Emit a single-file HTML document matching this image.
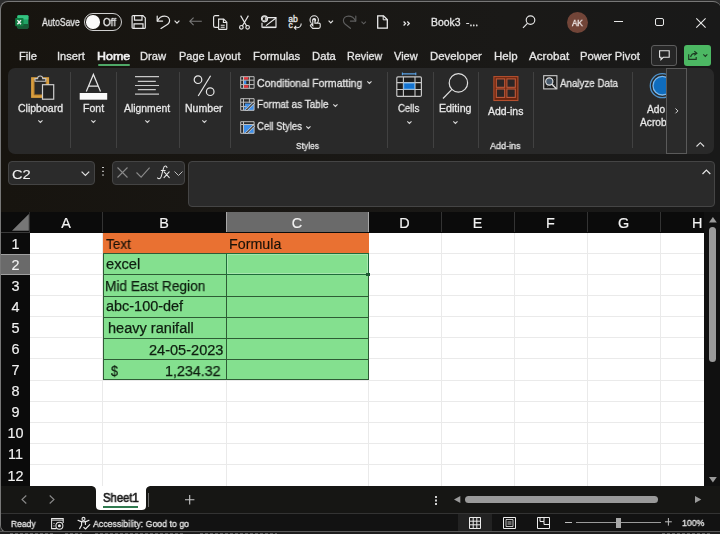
<!DOCTYPE html>
<html><head><meta charset="utf-8">
<style>
*{margin:0;padding:0;box-sizing:border-box}
html,body{width:720px;height:534px;overflow:hidden;background:#1b1916}
body{position:relative;font-family:"Liberation Sans",sans-serif;color:#e6e6e6}
.a{position:absolute}
.t{position:absolute;white-space:nowrap;line-height:1;transform-origin:0 0;-webkit-text-stroke:0.3px currentColor;will-change:transform}
svg{position:absolute;overflow:visible}
.sep{position:absolute;width:1px;background:#414141}
.hl{position:absolute;height:1px}
.vl{position:absolute;width:1px}
.ch{position:absolute;top:212px;height:20px;color:#f2f2f2;font-size:14.4px;text-align:center;line-height:23px;-webkit-text-stroke:0.15px #f2f2f2;will-change:transform}
.rh{position:absolute;left:1px;width:29px;color:#f2f2f2;font-size:14.4px;text-align:center;-webkit-text-stroke:0.15px #f2f2f2;will-change:transform}
</style></head><body>
<!-- window frame -->
<div class="a" style="left:0;top:0;width:720px;height:534px;background:#2c2c2c"></div>
<div class="a" style="left:0;top:1px;width:721px;height:532px;background:linear-gradient(90deg,#17140f,#1a1917 70%,#191919);border:1.4px solid #777;border-right:none;border-radius:8px 8px 8px 8px"></div>

<!-- ===== TITLE BAR ICONS ===== -->
<svg style="left:14px;top:15px" width="16" height="15" viewBox="0 0 16 15">
  <rect x="3.4" y="0.2" width="11" height="13.2" rx="1" fill="#21a366"/>
  <path d="M3.4 1.2a1 1 0 0 1 1-1h9a1 1 0 0 1 1 1V4.6H3.4z" fill="#33c481"/>
  <path d="M3.4 9h11v3.4a1 1 0 0 1-1 1h-9a1 1 0 0 1-1-1z" fill="#185c37"/>
  <rect x="1.2" y="3.1" width="8.3" height="8.1" rx="0.8" fill="#107c41"/>
  <path d="M3.4 5.1l3.6 4.2M7 5.1L3.4 9.3" stroke="#f4f4f4" stroke-width="1.4"/>
</svg>
<!-- toggle -->
<div class="a" style="left:84px;top:13px;width:38px;height:18px;border:1.3px solid #cfcfcf;border-radius:9px"></div>
<div class="a" style="left:86.3px;top:15.3px;width:13.4px;height:13.4px;border-radius:50%;background:#fafafa"></div>
<!-- save -->
<svg style="left:131px;top:15px" width="15" height="14" viewBox="0 0 15 14" fill="none" stroke="#e8e8e8" stroke-width="1.2">
  <path d="M1.1 1.6a1 1 0 0 1 1-1H12l2.3 2.3v9.5a1 1 0 0 1-1 1H2.1a1 1 0 0 1-1-1z"/>
  <path d="M3.5 0.6v4.6h7.5V0.6"/>
  <path d="M3 13.4V8.9h9v4.5"/>
</svg>
<!-- undo -->
<svg style="left:156px;top:15px" width="16" height="15" viewBox="0 0 16 15" fill="none" stroke="#e8e8e8" stroke-width="1.2" stroke-linecap="round" stroke-linejoin="round">
  <path d="M1.2 1.1v5h5.4"/>
  <path d="M1.4 5.9C3 2.6 5.8 1.1 8.6 1.1c3 0 5 2.2 5 4.6 0 1.5-.7 2.5-1.9 3.6L5 13.4"/>
</svg>
<svg style="left:174px;top:20px" width="6" height="4" viewBox="0 0 6 4" fill="none" stroke="#e0e0e0" stroke-width="1.2"><path d="M0.6 0.7l2.4 2.4 2.4-2.4"/></svg>
<!-- back arrow (disabled) -->
<svg style="left:189px;top:17px" width="13" height="9" viewBox="0 0 13 9" fill="none" stroke="#7a7a7a" stroke-width="1.1"><path d="M12.8 4.3H0.8M4.6 0.6L0.8 4.3l3.8 3.8"/></svg>
<!-- copy -->
<svg style="left:213px;top:15px" width="15" height="15" viewBox="0 0 15 15" fill="none" stroke="#e8e8e8" stroke-width="1.15">
  <path d="M6.2 0.6H2.2a1.6 1.6 0 0 0-1.6 1.6v8.6a1.6 1.6 0 0 0 1.6 1.6h3"/>
  <path d="M5.6 4.1h5.1l3.1 3.1v6.6a.6.6 0 0 1-.6.6H6.2a.6.6 0 0 1-.6-.6z"/>
  <path d="M10.4 4.1v3.4h3.4"/>
  <path d="M7.7 10.2h4M7.7 12.2h4"/>
</svg>
<!-- scissors -->
<svg style="left:239px;top:15px" width="11" height="15" viewBox="0 0 11 15" fill="none" stroke="#e8e8e8" stroke-width="1.15">
  <path d="M1.6 0.6l6.2 10.6M9.4 0.6L3.2 11.2"/>
  <circle cx="2.4" cy="12.3" r="1.8"/><circle cx="8.6" cy="12.3" r="1.8"/>
</svg>
<!-- email -->
<svg style="left:261px;top:15px" width="16" height="13" viewBox="0 0 16 13" fill="none" stroke="#e8e8e8" stroke-width="1.15">
  <path d="M6.5 2.6H15v9.6H1v-4.5"/>
  <path d="M5 10.6l10-7.6"/>
  <circle cx="3.5" cy="3.8" r="3" fill="#17140f"/>
  <path d="M4.4 2.5v2.3a.6.6 0 0 0 1.2 0V3.8a2.1 2.1 0 1 0-1.1 1.8" stroke-width="0.9"/>
  <path d="M1.5 12.4h13.5" stroke-width="1.4"/>
</svg>
<!-- spelling abc -->
<svg style="left:288px;top:15px" width="15" height="15" viewBox="0 0 15 15" fill="#e8e8e8">
  <text x="0.2" y="6.8" font-family="Liberation Sans" font-size="8.6" stroke="#e8e8e8" stroke-width="0.3">ab</text>
  <text x="0.4" y="13.3" font-family="Liberation Sans" font-size="8.6" stroke="#e8e8e8" stroke-width="0.3">c</text>
  <path d="M13.2 8.4c0 2.4-1.8 4.4-4.5 4.4H6.4M8.2 10.9l-1.9 1.9 1.9 1.9" fill="none" stroke="#e8e8e8" stroke-width="1.1"/>
</svg>
<!-- touch -->
<svg style="left:309px;top:15px" width="13" height="14" viewBox="0 0 13 14" fill="none" stroke="#e8e8e8" stroke-width="1.1">
  <circle cx="5.2" cy="5" r="4.2"/>
  <circle cx="5.2" cy="5" r="2" fill="#e8e8e8" stroke="none"/>
  <path d="M3.8 5.3v5.4l-1-.9a.9.9 0 0 0-1.3 1.2l2.2 2.4h5.9c.9 0 1.6-.7 1.6-1.6V9.3c0-.7-.5-1.2-1.2-1.2H5.9V5.3a1 1 0 0 0-2.1 0z" fill="#17140f"/>
</svg>
<svg style="left:328px;top:20.3px" width="6" height="4" viewBox="0 0 6 4" fill="none" stroke="#e0e0e0" stroke-width="1.2"><path d="M0.6 0.7l2.2 2.2 2.2-2.2"/></svg>
<!-- redo (disabled) -->
<svg style="left:343px;top:15px" width="14" height="14" viewBox="0 0 14 14" fill="none" stroke="#5e5e5e" stroke-width="1.15" stroke-linecap="round" stroke-linejoin="round">
  <path d="M12.8 1.1v5H7.4"/>
  <path d="M12.6 5.9C11 2.6 8.2 1.1 5.4 1.1c-3 0-5 2.2-5 4.6 0 1.5.7 2.5 1.9 3.6L7.4 13.3"/>
</svg>
<svg style="left:361px;top:20.5px" width="6" height="4" viewBox="0 0 6 4" fill="none" stroke="#5e5e5e" stroke-width="1.1"><path d="M0.5 0.6l2.2 2.2 2.2-2.2"/></svg>
<!-- new doc -->
<svg style="left:377px;top:15px" width="11" height="14" viewBox="0 0 11 14" fill="none" stroke="#f0f0f0" stroke-width="1.25">
  <path d="M0.7 0.8h5.8l3.8 3.8v8.6H0.7z"/>
  <path d="M6.2 0.8v4h4" stroke-width="1"/>
</svg>
<svg style="left:403.3px;top:20.8px" width="7" height="5" viewBox="0 0 7 5" fill="none" stroke="#e8e8e8" stroke-width="1.2"><path d="M0.6 0.5l2 2-2 2M4.3 0.5l2 2-2 2"/></svg>
<!-- search -->
<svg style="left:522px;top:15px" width="14" height="14" viewBox="0 0 14 14" fill="none" stroke="#e8e8e8" stroke-width="1.15">
  <circle cx="8.5" cy="5.1" r="4.3"/><path d="M5.4 8.3L1 12.8"/>
</svg>
<!-- avatar -->
<div class="a" style="left:567px;top:11.5px;width:21px;height:21px;border-radius:50%;background:#724538"></div>
<!-- window controls -->
<div class="a" style="left:613.5px;top:21px;width:9.5px;height:1.1px;background:#e8e8e8"></div>
<div class="a" style="left:654.7px;top:17.9px;width:9.6px;height:8.6px;border:1.1px solid #e8e8e8;border-radius:2px"></div>
<svg style="left:696px;top:17.5px" width="10" height="10" viewBox="0 0 10 10" fill="none" stroke="#e8e8e8" stroke-width="1.1"><path d="M0.3 0.3l9.3 9.3M9.6 0.3L0.3 9.6"/></svg>

<!-- ===== MENU ===== -->
<div class="a" style="left:98px;top:64px;width:32px;height:2px;border-radius:1px;background:#4fa867"></div>
<!-- comment btn -->
<div class="a" style="left:651px;top:45px;width:26px;height:21px;border:1px solid #5d5d5d;border-radius:3px;background:#262626"></div>
<svg style="left:659px;top:50px" width="11" height="11" viewBox="0 0 11 11" fill="none" stroke="#e8e8e8" stroke-width="1.1">
  <path d="M0.6 0.7h9.6v6.6H4.2L2 9.6V7.3H0.6z"/>
</svg>
<!-- share btn -->
<div class="a" style="left:684px;top:45px;width:27px;height:21px;border-radius:3px;background:#4cb863"></div>
<svg style="left:688px;top:50px" width="10" height="10" viewBox="0 0 10 10" fill="none" stroke="#1d3a22" stroke-width="1.15">
  <path d="M0.7 4.3v5h7.5V7"/>
  <path d="M2.6 7.2c.4-2.6 2.2-3.9 5-3.9M6.3 1.2l2.6 2.1-2.6 2.1"/>
</svg>
<svg style="left:703px;top:54px" width="5" height="3" viewBox="0 0 5 3" fill="none" stroke="#1d3a22" stroke-width="1.1"><path d="M0.3 0.4l2 2 2-2"/></svg>
<!-- ===== RIBBON ===== -->
<div class="a" style="left:8px;top:68px;width:706px;height:86px;background:#292929;border-radius:7px"></div>
<div class="sep" style="left:70px;top:72px;height:76px"></div>
<div class="sep" style="left:115.5px;top:72px;height:76px"></div>
<div class="sep" style="left:178.5px;top:72px;height:76px"></div>
<div class="sep" style="left:230px;top:72px;height:76px"></div>
<div class="sep" style="left:386.5px;top:72px;height:76px"></div>
<div class="sep" style="left:432.5px;top:72px;height:76px"></div>
<div class="sep" style="left:478px;top:72px;height:76px"></div>
<div class="sep" style="left:532.5px;top:72px;height:76px"></div>
<div class="sep" style="left:632px;top:72px;height:76px"></div>
<!-- clipboard icon -->
<svg style="left:30px;top:73px" width="26" height="28" viewBox="0 0 26 28" fill="none">
  <rect x="2.75" y="5.85" width="14.7" height="17.4" stroke="#d99e3e" stroke-width="3.3"/>
  <rect x="4.1" y="7.2" width="12" height="14.7" stroke="#8a5a1c" stroke-width="0.6"/>
  <path d="M5 8.2V5.6h2.6a2.55 2.55 0 0 1 5.1 0h3.1v2.6z" fill="#292929" stroke="#c4c4c4" stroke-width="1.1"/>
  <rect x="12.5" y="11.7" width="11.2" height="14.5" fill="#222" stroke="#cfcfcf" stroke-width="1.2"/>
</svg>
<!-- font A -->
<svg style="left:79px;top:73px" width="29" height="28" viewBox="0 0 29 28" fill="none">
  <path d="M7.3 18.6L14.4 1.4l7.1 17.2M9.6 13.2h9.6" stroke="#e6e6e6" stroke-width="1.2"/>
  <rect x="0.7" y="20" width="27.5" height="6.7" fill="#fafafa"/>
</svg>
<!-- alignment -->
<svg style="left:134px;top:75px" width="26" height="21" viewBox="0 0 26 21" stroke="#c8c8c8" stroke-width="1.2">
  <path d="M1 1.7h24M3.8 6.3h18M1 10.5h24M3.8 14.7h18M1 19.2h24"/>
</svg>
<!-- percent -->
<svg style="left:193px;top:75px" width="23" height="22" viewBox="0 0 23 22" fill="none" stroke="#e6e6e6" stroke-width="1.2">
  <circle cx="5" cy="4.7" r="3.8"/><circle cx="17.2" cy="16.7" r="3.8"/><path d="M17.6 0.8L5.2 21"/>
</svg>
<!-- small chevrons under big buttons -->
<svg style="left:38px;top:120px" width="5" height="3" viewBox="0 0 5 3" fill="none" stroke="#d8d8d8" stroke-width="1.1"><path d="M0.3 0.4l2.1 2.1 2.1-2.1"/></svg>
<svg style="left:91px;top:120px" width="5" height="3" viewBox="0 0 5 3" fill="none" stroke="#d8d8d8" stroke-width="1.1"><path d="M0.3 0.4l2.1 2.1 2.1-2.1"/></svg>
<svg style="left:144.5px;top:120px" width="5" height="3" viewBox="0 0 5 3" fill="none" stroke="#d8d8d8" stroke-width="1.1"><path d="M0.3 0.4l2.1 2.1 2.1-2.1"/></svg>
<svg style="left:201.5px;top:120px" width="5" height="3" viewBox="0 0 5 3" fill="none" stroke="#d8d8d8" stroke-width="1.1"><path d="M0.3 0.4l2.1 2.1 2.1-2.1"/></svg>
<svg style="left:406.5px;top:120.5px" width="5" height="3" viewBox="0 0 5 3" fill="none" stroke="#d8d8d8" stroke-width="1.1"><path d="M0.3 0.4l2.1 2.1 2.1-2.1"/></svg>
<svg style="left:452.5px;top:120.5px" width="5" height="3" viewBox="0 0 5 3" fill="none" stroke="#d8d8d8" stroke-width="1.1"><path d="M0.3 0.4l2.1 2.1 2.1-2.1"/></svg>
<!-- styles chevrons -->
<svg style="left:366.5px;top:81px" width="5" height="3" viewBox="0 0 5 3" fill="none" stroke="#d8d8d8" stroke-width="1.1"><path d="M0.3 0.4l2.1 2.1 2.1-2.1"/></svg>
<svg style="left:332.5px;top:103.5px" width="5" height="3" viewBox="0 0 5 3" fill="none" stroke="#d8d8d8" stroke-width="1.1"><path d="M0.3 0.4l2.1 2.1 2.1-2.1"/></svg>
<svg style="left:306px;top:125.5px" width="5" height="3" viewBox="0 0 5 3" fill="none" stroke="#d8d8d8" stroke-width="1.1"><path d="M0.3 0.4l2.1 2.1 2.1-2.1"/></svg>
<!-- conditional formatting icon -->
<svg style="left:240px;top:75.5px" width="15" height="13" viewBox="0 0 15 13">
  <rect x="3.5" y="1" width="4.8" height="2.6" fill="#e8323a"/>
  <rect x="3.5" y="9.2" width="4.8" height="2.6" fill="#e8323a"/>
  <rect x="3.5" y="4.4" width="2.8" height="4" fill="#3d8ee8"/>
  <path d="M0.7 0.7h13.4v11.6H0.7zM0.7 4.2h13.4M0.7 8.6h13.4M3.5 0.7v11.6M9.4 0.7v11.6" fill="none" stroke="#bdbdbd" stroke-width="1"/>
</svg>
<!-- format as table icon -->
<svg style="left:240px;top:98px" width="15" height="13" viewBox="0 0 15 13">
  <path d="M5 5.5h9v7H4z" fill="#3d8ee8"/>
  <path d="M0.7 0.7h13.4v11.6H0.7zM0.7 4.2h13.4M0.7 8.6h6M3.5 0.7v11.6M9.4 0.7v4" fill="none" stroke="#bdbdbd" stroke-width="1"/>
  <path d="M5.5 11.8l7.8-7.8 1.2 1.2-7.8 7.8z" fill="#292929" stroke="#e0e0e0" stroke-width="0.9"/>
</svg>
<!-- cell styles icon -->
<svg style="left:240px;top:120.5px" width="15" height="13" viewBox="0 0 15 13">
  <path d="M3.5 3.5h10.6v9H3.5z" fill="#3d8ee8"/>
  <path d="M0.7 0.7h13.4v11.6H0.7zM0.7 3.5h13.4M3.5 0.7v11.6" fill="none" stroke="#bdbdbd" stroke-width="1"/>
  <path d="M5.5 11.8l7.8-7.8 1.2 1.2-7.8 7.8z" fill="#292929" stroke="#e0e0e0" stroke-width="0.9"/>
</svg>
<!-- cells icon -->
<svg style="left:396px;top:71.5px" width="27" height="25" viewBox="0 0 27 25">
  <path d="M6.4 1.9h13.4M6.4 0.6v2.6M19.8 0.6v2.6" stroke="#5aa2e6" stroke-width="1.1"/>
  <rect x="0.8" y="4.9" width="24.6" height="19.5" rx="1.2" fill="#1c1c1c" stroke="#c8c8c8" stroke-width="1.2"/>
  <rect x="7.4" y="10.6" width="11.6" height="6.9" fill="#1473d0"/>
  <path d="M0.8 10.6h24.6M0.8 17.5h24.6M7.4 4.9v19.5M19 4.9v19.5" stroke="#c8c8c8" stroke-width="1.1"/>
  <rect x="7.9" y="11.1" width="10.6" height="5.9" fill="none" stroke="#5aa8ee" stroke-width="0.8"/>
</svg>
<!-- editing magnifier -->
<svg style="left:442px;top:72px" width="28" height="28" viewBox="0 0 28 28" fill="none" stroke="#e0e0e0" stroke-width="1.2">
  <circle cx="16.4" cy="10.9" r="9.2"/><path d="M9.9 17.4L1 26.5"/>
</svg>
<!-- add-ins icon -->
<svg style="left:493px;top:75.5px" width="26" height="25" viewBox="0 0 26 25">
  <rect x="0.9" y="0.6" width="24" height="23.9" fill="#6a240e" stroke="#b5502f" stroke-width="1.1"/>
  <g fill="#2b2626" stroke="#bf5a3a" stroke-width="1.1">
  <rect x="3.3" y="2.9" width="8.4" height="8.4"/><rect x="13.9" y="2.9" width="8.4" height="8.4"/>
  <rect x="3.3" y="13" width="8.4" height="8.4"/><rect x="13.9" y="13" width="8.4" height="8.4"/>
  </g>
</svg>
<!-- analyze data icon -->
<svg style="left:542.5px;top:75px" width="15" height="15" viewBox="0 0 15 15" fill="none">
  <rect x="0.7" y="0.7" width="13.2" height="13.2" fill="#1c1c1c" stroke="#cfcfcf" stroke-width="1.1"/>
  <path d="M3 4.5h9M3 9.5h9M4.5 3v9M10 3v9" stroke="#555" stroke-width="0.7" stroke-dasharray="1 1"/>
  <circle cx="6.3" cy="6.5" r="3.6" fill="#46586a" stroke="#e0e0e0" stroke-width="1.1"/>
  <path d="M8.9 9.2l4.5 4.5" stroke="#e0e0e0" stroke-width="1.3"/>
</svg>
<!-- adobe -->
<svg style="left:649px;top:73px" width="27" height="26" viewBox="0 0 27 26">
  <circle cx="13.3" cy="12.7" r="12" fill="none" stroke="#4f93cc" stroke-width="1.3"/>
  <circle cx="13.3" cy="12.7" r="9.3" fill="#0f6cbd" stroke="#7ab8ee" stroke-width="1.3"/>
</svg>
<div class="t" style="left:646.5px;top:104.5px;font-size:10.2px;color:#e6e6e6">Ado</div>
<div class="t" style="left:639.5px;top:117.5px;font-size:10.2px;color:#e6e6e6">Acrob</div>
<!-- overflow box -->
<div class="a" style="left:666px;top:68px;width:21px;height:86px;background:#2a2a2a;border:1px solid #5a5a5a"></div>
<svg style="left:674.5px;top:108px" width="4" height="6" viewBox="0 0 4 6" fill="none" stroke="#d8d8d8" stroke-width="1"><path d="M0.5 0.5l2.4 2.4-2.4 2.4"/></svg>
<!-- collapse ^ -->
<svg style="left:695.5px;top:142px" width="9" height="5" viewBox="0 0 9 5" fill="none" stroke="#e0e0e0" stroke-width="1.1"><path d="M0.5 4.5L4.3 0.7 8.1 4.5"/></svg>
<!-- ===== FORMULA BAR ===== -->
<div class="a" style="left:8px;top:160.5px;width:87px;height:24.5px;background:#2b2b2b;border:1px solid #444;border-radius:4px"></div>
<svg style="left:81px;top:170.5px" width="9" height="5" viewBox="0 0 9 5" fill="none" stroke="#e0e0e0" stroke-width="1.2"><path d="M0.6 0.6l3.8 3.8 3.8-3.8"/></svg>
<div class="a" style="left:102px;top:166.5px;width:1.7px;height:1.7px;border-radius:1px;background:#e0e0e0;box-shadow:0 3.8px 0 #e0e0e0,0 7.6px 0 #e0e0e0"></div>
<div class="a" style="left:111.5px;top:160.5px;width:73.5px;height:24.5px;background:#2b2b2b;border:1px solid #444;border-radius:4px"></div>
<svg style="left:117px;top:167px" width="11" height="11" viewBox="0 0 11 11" fill="none" stroke="#8a8a8a" stroke-width="1.1"><path d="M0.5 0.5l10 10M10.5 0.5l-10 10"/></svg>
<svg style="left:136px;top:167px" width="14" height="11" viewBox="0 0 14 11" fill="none" stroke="#8a8a8a" stroke-width="1.1"><path d="M0.5 5.5l4.6 4.6L13.6 0.6"/></svg>
<svg style="left:157px;top:165px" width="14" height="15" viewBox="0 0 14 15" fill="none" stroke="#e6e6e6" stroke-width="1.05" stroke-linecap="round">
  <path d="M10 2.6C9.8 1.5 9 1 8.2 1.1 7 1.3 6.6 2.4 6.3 3.8L4.2 11.6C3.8 13 3.2 13.6 2.2 13.6c-.8 0-1.4-.3-1.6-.7"/>
  <path d="M4.2 5.5h4"/>
  <path d="M7.1 6.9l5.2 5.8M12.2 6.9L7 12.7"/>
</svg>
<svg style="left:174px;top:171px" width="9" height="5" viewBox="0 0 9 5" fill="none" stroke="#bdbdbd" stroke-width="1"><path d="M0.5 0.5l4 4 4-4"/></svg>
<div class="a" style="left:188px;top:160.5px;width:526.5px;height:46.5px;background:#2a2a2a;border:1px solid #454545;border-radius:4px"></div>
<svg style="left:702px;top:168.5px" width="9" height="6" viewBox="0 0 9 6" fill="none" stroke="#e6e6e6" stroke-width="1.2"><path d="M0.5 5L4.4 1 8.3 5"/></svg>

<!-- ===== GRID ===== -->
<div class="a" style="left:1px;top:212px;width:703px;height:20.5px;background:#0b0b0b"></div>
<div class="a" style="left:1px;top:212px;width:29px;height:274px;background:#0b0b0b"></div>
<div class="a" style="left:704px;top:212px;width:16px;height:274px;background:#101010"></div>
<div class="a" style="left:30px;top:232.5px;width:674px;height:253px;background:#ffffff"></div>
<!-- corner triangle -->
<svg style="left:11.5px;top:214.3px" width="17" height="17" viewBox="0 0 17 17"><path d="M0 16.7H16.8V0z" fill="#767676"/></svg>
<div class="a" style="left:29px;top:212px;width:1px;height:20.5px;background:#2e2e2e"></div>
<div class="a" style="left:1px;top:232px;width:29px;height:1px;background:#3a3a3a"></div>
<!-- header separators -->
<div class="vl" style="left:102px;top:212px;height:20px;background:#333"></div>
<div class="vl" style="left:441px;top:212px;height:20px;background:#333"></div>
<div class="vl" style="left:514px;top:212px;height:20px;background:#333"></div>
<div class="vl" style="left:587px;top:212px;height:20px;background:#333"></div>
<div class="vl" style="left:660px;top:212px;height:20px;background:#333"></div>
<!-- selected col header C -->
<div class="a" style="left:226px;top:212px;width:142.5px;height:20px;background:#6a6a6a;border-left:1px solid #a8a8a8;border-right:1px solid #a8a8a8"></div>
<!-- selected row header 2 -->
<div class="a" style="left:1px;top:253.5px;width:29px;height:21px;background:#6a6a6a;border-top:1px solid #a0a0a0;border-bottom:1px solid #a0a0a0"></div>
<!-- column header labels -->
<div class="ch" style="left:30px;width:72px">A</div>
<div class="ch" style="left:102px;width:124px">B</div>
<div class="ch" style="left:226px;width:142px">C</div>
<div class="ch" style="left:368px;width:73px">D</div>
<div class="ch" style="left:441px;width:73px">E</div>
<div class="ch" style="left:514px;width:73px">F</div>
<div class="ch" style="left:587px;width:73px">G</div>
<div class="ch" style="left:660px;width:73px;text-align:left;padding-left:32px">H</div>
<!-- row header labels -->
<div class="rh" style="top:232.5px;height:21px;line-height:22px">1</div>
<div class="rh" style="top:253.5px;height:21px;line-height:22px">2</div>
<div class="rh" style="top:274.6px;height:21px;line-height:22px">3</div>
<div class="rh" style="top:295.7px;height:21px;line-height:22px">4</div>
<div class="rh" style="top:316.8px;height:21px;line-height:22px">5</div>
<div class="rh" style="top:337.9px;height:21px;line-height:22px">6</div>
<div class="rh" style="top:359px;height:21px;line-height:22px">7</div>
<div class="rh" style="top:380.1px;height:21px;line-height:22px">8</div>
<div class="rh" style="top:401.2px;height:21px;line-height:22px">9</div>
<div class="rh" style="top:422.3px;height:21px;line-height:22px">10</div>
<div class="rh" style="top:443.4px;height:21px;line-height:22px">11</div>
<div class="rh" style="top:464.5px;height:21px;line-height:22px">12</div>
<!-- grid lines -->
<div class="hl" style="left:30px;width:674px;top:253px;background:#eaeaea"></div>
<div class="hl" style="left:30px;width:674px;top:274px;background:#eaeaea"></div>
<div class="hl" style="left:30px;width:674px;top:295px;background:#eaeaea"></div>
<div class="hl" style="left:30px;width:674px;top:316px;background:#eaeaea"></div>
<div class="hl" style="left:30px;width:674px;top:337px;background:#eaeaea"></div>
<div class="hl" style="left:30px;width:674px;top:358px;background:#eaeaea"></div>
<div class="hl" style="left:30px;width:674px;top:379.5px;background:#eaeaea"></div>
<div class="hl" style="left:30px;width:674px;top:401px;background:#eaeaea"></div>
<div class="hl" style="left:30px;width:674px;top:422px;background:#eaeaea"></div>
<div class="hl" style="left:30px;width:674px;top:443px;background:#eaeaea"></div>
<div class="hl" style="left:30px;width:674px;top:464px;background:#eaeaea"></div>
<div class="vl" style="left:102px;top:232.5px;height:253px;background:#eaeaea"></div>
<div class="vl" style="left:225.5px;top:232.5px;height:253px;background:#eaeaea"></div>
<div class="vl" style="left:368px;top:232.5px;height:253px;background:#eaeaea"></div>
<div class="vl" style="left:441px;top:232.5px;height:253px;background:#eaeaea"></div>
<div class="vl" style="left:514px;top:232.5px;height:253px;background:#eaeaea"></div>
<div class="vl" style="left:587px;top:232.5px;height:253px;background:#eaeaea"></div>
<div class="vl" style="left:660px;top:232.5px;height:253px;background:#eaeaea"></div>
<!-- orange header row -->
<div class="a" style="left:102.5px;top:232.5px;width:266px;height:21px;background:#e97132;border-bottom:1px solid #4a3a20"></div>
<!-- green table -->
<div class="a" style="left:102.5px;top:253px;width:266px;height:126.5px;background:#84e08f;border:1px solid #2e5c35"></div>
<div class="hl" style="left:102.5px;width:266px;top:274px;background:#2e5c35"></div>
<div class="hl" style="left:102.5px;width:266px;top:295.5px;background:#2e5c35"></div>
<div class="hl" style="left:102.5px;width:266px;top:316.5px;background:#2e5c35"></div>
<div class="hl" style="left:102.5px;width:266px;top:337.5px;background:#2e5c35"></div>
<div class="hl" style="left:102.5px;width:266px;top:358.5px;background:#2e5c35"></div>
<div class="vl" style="left:225.5px;top:253px;height:126.5px;background:#2e5c35"></div>
<!-- selection C2 -->
<div class="a" style="left:225.5px;top:253px;width:143.5px;height:22px;border:1px solid #1f6b3a;box-shadow:inset 0 0 0 1px #a6e6ae"></div>
<div class="a" style="left:366px;top:272.5px;width:3.5px;height:3.5px;background:#1f5a34"></div>
<!-- vertical scrollbar -->
<svg style="left:708.5px;top:216.5px" width="8" height="6" viewBox="0 0 8 6"><path d="M0 5.6L3.9 0 7.8 5.6z" fill="#9a9a9a"/></svg>
<div class="a" style="left:709px;top:226.5px;width:7px;height:135.5px;border-radius:3.5px;background:#9a9a9a"></div>
<svg style="left:708.5px;top:477px" width="8" height="6" viewBox="0 0 8 6"><path d="M0 0L3.9 5.6 7.8 0z" fill="#9a9a9a"/></svg>
<!-- ===== SHEET TAB BAR ===== -->
<div class="a" style="left:1px;top:485.5px;width:719px;height:27px;background:#161614"></div>
<svg style="left:21px;top:495px" width="6" height="9" viewBox="0 0 6 9" fill="none" stroke="#8a8a8a" stroke-width="1.1"><path d="M5.3 0.5L1 4.5l4.3 4"/></svg>
<svg style="left:48.5px;top:495px" width="6" height="9" viewBox="0 0 6 9" fill="none" stroke="#8a8a8a" stroke-width="1.1"><path d="M0.7 0.5L5 4.5l-4.3 4"/></svg>
<!-- tab -->
<svg style="left:90px;top:485.5px" width="62" height="25" viewBox="0 0 62 25">
  <path d="M0 0h62c-4.5 0-6 1.5-6 5v15a4 4 0 0 1-4 4H10a4 4 0 0 1-4-4V5C6 1.5 4.5 0 0 0z" fill="#ffffff"/>
</svg>
<div class="a" style="left:103px;top:505.5px;width:35px;height:2px;background:#2f7a4f"></div>
<div class="a" style="left:148px;top:493px;width:1px;height:14px;background:#6a6a6a"></div>
<svg style="left:185px;top:494.5px" width="10" height="10" viewBox="0 0 10 10" fill="none" stroke="#c8c8c8" stroke-width="1.1"><path d="M4.7 0v9.4M0 4.7h9.4"/></svg>
<!-- horizontal scroll -->
<div class="a" style="left:435px;top:496px;width:2px;height:2px;background:#d0d0d0;box-shadow:0 3.5px 0 #d0d0d0,0 7px 0 #d0d0d0"></div>
<svg style="left:454px;top:495.8px" width="7" height="7" viewBox="0 0 7 7"><path d="M6.3 0L0 3.5 6.3 7z" fill="#9a9a9a"/></svg>
<div class="a" style="left:464.5px;top:495.8px;width:193px;height:7px;border-radius:3.5px;background:#9a9a9a"></div>
<svg style="left:695px;top:495.8px" width="7" height="7" viewBox="0 0 7 7"><path d="M0 0L6.3 3.5 0 7z" fill="#9a9a9a"/></svg>

<!-- ===== STATUS BAR ===== -->
<div class="a" style="left:1px;top:512.5px;width:719px;height:1px;background:#333"></div>
<div class="a" style="left:1px;top:513.5px;width:719px;height:18px;background:#121212;border-radius:0 0 0 7px"></div>
<div class="a" style="left:0px;top:531px;width:720px;height:1.3px;background:#5a5a5a"></div>
<div class="a" style="left:0px;top:532.3px;width:720px;height:2px;background:#1e1e1e"></div>
<div class="a" style="left:10px;top:532.6px;width:45px;height:1.4px;background:repeating-linear-gradient(90deg,#5e5e5e 0 3px,transparent 3px 5px)"></div>
<div class="a" style="left:65px;top:532.6px;width:17px;height:1.4px;background:repeating-linear-gradient(90deg,#5e5e5e 0 3px,transparent 3px 5px)"></div>
<div class="a" style="left:95px;top:532.6px;width:90px;height:1.4px;background:repeating-linear-gradient(90deg,#5e5e5e 0 3px,transparent 3px 5px)"></div>
<div class="a" style="left:200px;top:532.6px;width:77px;height:1.4px;background:repeating-linear-gradient(90deg,#5e5e5e 0 3px,transparent 3px 5px)"></div>
<div class="a" style="left:662px;top:532.6px;width:50px;height:1.4px;background:repeating-linear-gradient(90deg,#5e5e5e 0 3px,transparent 3px 5px)"></div>
<!-- macro record icon -->
<svg style="left:50.5px;top:517.5px" width="14" height="12" viewBox="0 0 14 12" fill="none" stroke="#e6e6e6" stroke-width="1.05">
  <path d="M5.5 10.6H0.6V0.6h11.6v4.5"/><path d="M0.6 2.2h11.6" stroke-width="0.9"/>
  <circle cx="3" cy="5.3" r="0.6" fill="#e6e6e6" stroke="none"/><circle cx="3" cy="7.9" r="0.6" fill="#e6e6e6" stroke="none"/>
  <circle cx="8.4" cy="7.7" r="3.5" fill="#121212"/><circle cx="8.4" cy="7.7" r="1.5" fill="#e6e6e6" stroke="none"/>
</svg>
<!-- accessibility icon -->
<svg style="left:77px;top:517px" width="14" height="13" viewBox="0 0 14 13" fill="none" stroke="#e6e6e6" stroke-width="1.15" stroke-linecap="round" stroke-linejoin="round">
  <circle cx="6.5" cy="1.9" r="1.5"/>
  <path d="M1 3.3c1.5 1.1 3.3 1.6 5.5 1.6s4-.5 5.5-1.6"/>
  <path d="M4.6 4.8v3.4L2.6 11.6M8.4 4.8v2.6"/>
  <path d="M6.8 10.3l1.7 1.7 4.3-4.3"/>
</svg>
<!-- view buttons -->
<div class="a" style="left:458px;top:513.5px;width:34px;height:17.5px;background:#222"></div>
<svg style="left:469px;top:517px" width="12" height="12" viewBox="0 0 12 12" fill="none" stroke="#ececec" stroke-width="1">
  <path d="M0.5 0.5h11v11h-11zM0.5 4.2h11M0.5 7.8h11M4.2 0.5v11M7.8 0.5v11"/>
</svg>
<svg style="left:503px;top:517px" width="13" height="12" viewBox="0 0 13 12" fill="none" stroke="#ececec" stroke-width="1">
  <path d="M0.5 0.5h12v11h-12z"/><path d="M3 2.5h7v7H3z" stroke-width="0.8"/><path d="M4.5 5h4M4.5 7h4" stroke-width="0.8"/>
</svg>
<svg style="left:537px;top:517px" width="13" height="12" viewBox="0 0 13 12" fill="none" stroke="#ececec" stroke-width="1">
  <path d="M0.5 0.5h12v11h-12z"/><path d="M3 0.5v4h4v3h5.5M7 0.5v4" stroke-width="1"/>
</svg>
<!-- zoom slider -->
<div class="a" style="left:565px;top:522.3px;width:6.5px;height:1px;background:#bdbdbd"></div>
<div class="a" style="left:576px;top:522px;width:85px;height:1.3px;background:#9a9a9a"></div>
<div class="a" style="left:616px;top:518px;width:5px;height:10px;background:#a8a8a8"></div>
<svg style="left:665px;top:518.3px" width="7" height="8" viewBox="0 0 7 8" fill="none" stroke="#bdbdbd" stroke-width="1"><path d="M3.4 0v7.6M0 3.8h6.8"/></svg>
<div class="t" style="left:41.7px;top:18.22px;font-size:10.10px;transform:scaleX(0.860);color:#e6e6e6">AutoSave</div>
<div class="t" style="left:102.5px;top:18.22px;font-size:10.10px;transform:scaleX(0.973);color:#e6e6e6">Off</div>
<div class="t" style="left:430.9px;top:18.02px;font-size:10.10px;transform:scaleX(1.031);color:#e6e6e6">Book3</div>
<div class="t" style="left:466.4px;top:18.02px;font-size:10.10px;transform:scaleX(1.023);color:#e6e6e6">-...</div>
<div class="t" style="left:572.0px;top:19.21px;font-size:9.19px;transform:scaleX(0.880);color:#f4eeee">AK</div>
<div class="t" style="left:18.8px;top:51.48px;font-size:10.81px;transform:scaleX(1.035);color:#e6e6e6">File</div>
<div class="t" style="left:56.8px;top:51.48px;font-size:10.81px;transform:scaleX(1.026);color:#e6e6e6">Insert</div>
<div class="t" style="left:97.3px;top:51.48px;font-size:10.81px;transform:scaleX(1.151);color:#f2f2f2;-webkit-text-stroke:0.55px currentColor">Home</div>
<div class="t" style="left:140.4px;top:51.48px;font-size:10.81px;transform:scaleX(1.036);color:#e6e6e6">Draw</div>
<div class="t" style="left:179.1px;top:51.48px;font-size:10.81px;transform:scaleX(1.013);color:#e6e6e6">Page Layout</div>
<div class="t" style="left:253.1px;top:51.48px;font-size:10.81px;transform:scaleX(1.049);color:#e6e6e6">Formulas</div>
<div class="t" style="left:311.8px;top:51.48px;font-size:10.81px;transform:scaleX(1.043);color:#e6e6e6">Data</div>
<div class="t" style="left:346.9px;top:51.48px;font-size:10.81px;transform:scaleX(0.996);color:#e6e6e6">Review</div>
<div class="t" style="left:394.0px;top:51.48px;font-size:10.81px;transform:scaleX(1.019);color:#e6e6e6">View</div>
<div class="t" style="left:429.6px;top:51.48px;font-size:10.81px;transform:scaleX(1.054);color:#e6e6e6">Developer</div>
<div class="t" style="left:493.8px;top:51.48px;font-size:10.81px;transform:scaleX(1.064);color:#e6e6e6">Help</div>
<div class="t" style="left:528.7px;top:51.48px;font-size:10.81px;transform:scaleX(1.078);color:#e6e6e6">Acrobat</div>
<div class="t" style="left:579.8px;top:51.48px;font-size:10.81px;transform:scaleX(1.037);color:#e6e6e6">Power Pivot</div>
<div class="t" style="left:17.7px;top:104.29px;font-size:10.19px;transform:scaleX(1.034);color:#e6e6e6">Clipboard</div>
<div class="t" style="left:82.8px;top:104.29px;font-size:10.19px;transform:scaleX(1.039);color:#e6e6e6">Font</div>
<div class="t" style="left:123.7px;top:104.29px;font-size:10.19px;transform:scaleX(1.021);color:#e6e6e6">Alignment</div>
<div class="t" style="left:185.0px;top:104.29px;font-size:10.19px;transform:scaleX(1.037);color:#e6e6e6">Number</div>
<div class="t" style="left:257.2px;top:77.54px;font-size:10.60px;transform:scaleX(0.987);color:#e6e6e6">Conditional Formatting</div>
<div class="t" style="left:256.9px;top:99.14px;font-size:10.60px;transform:scaleX(0.945);color:#e6e6e6">Format as Table</div>
<div class="t" style="left:257.3px;top:121.34px;font-size:10.60px;transform:scaleX(0.898);color:#e6e6e6">Cell Styles</div>
<div class="t" style="left:296.4px;top:141.27px;font-size:9.81px;transform:scaleX(0.862);color:#e6e6e6">Styles</div>
<div class="t" style="left:398.4px;top:103.89px;font-size:10.19px;transform:scaleX(0.943);color:#e6e6e6">Cells</div>
<div class="t" style="left:438.8px;top:103.89px;font-size:10.19px;transform:scaleX(1.044);color:#e6e6e6">Editing</div>
<div class="t" style="left:487.8px;top:106.69px;font-size:10.19px;transform:scaleX(1.025);color:#e6e6e6">Add-ins</div>
<div class="t" style="left:490.0px;top:140.67px;font-size:9.81px;transform:scaleX(0.922);color:#e6e6e6">Add-ins</div>
<div class="t" style="left:560.3px;top:77.74px;font-size:10.60px;transform:scaleX(0.921);color:#e6e6e6">Analyze Data</div>
<div class="t" style="left:11.8px;top:167.84px;font-size:13.60px;transform:scaleX(1.080);color:#f0f0f0;-webkit-text-stroke:0.1px currentColor">C2</div>
<div class="t" style="left:105.9px;top:236.70px;font-size:14.00px;transform:scaleX(0.972);color:#1a1208;-webkit-text-stroke:0.15px currentColor">Text</div>
<div class="t" style="left:228.5px;top:236.90px;font-size:14.00px;transform:scaleX(1.019);color:#1a1208;-webkit-text-stroke:0.15px currentColor">Formula</div>
<div class="t" style="left:105.6px;top:257.30px;font-size:14.00px;transform:scaleX(1.047);color:#0f1f10;-webkit-text-stroke:0.25px currentColor">excel</div>
<div class="t" style="left:105.2px;top:279.10px;font-size:14.00px;transform:scaleX(0.976);color:#0f1f10;-webkit-text-stroke:0.25px currentColor">Mid East Region</div>
<div class="t" style="left:105.8px;top:299.10px;font-size:14.00px;transform:scaleX(1.032);color:#0f1f10;-webkit-text-stroke:0.25px currentColor">abc-100-def</div>
<div class="t" style="left:108.3px;top:320.90px;font-size:14.00px;transform:scaleX(1.039);color:#0f1f10;-webkit-text-stroke:0.25px currentColor">heavy ranifall</div>
<div class="t" style="left:149.1px;top:342.76px;font-size:14.40px;transform:scaleX(1.011);color:#0f1f10;-webkit-text-stroke:0.25px currentColor">24-05-2023</div>
<div class="t" style="left:111.1px;top:363.96px;font-size:14.40px;transform:scaleX(0.876);color:#0f1f10;-webkit-text-stroke:0.25px currentColor">$</div>
<div class="t" style="left:164.9px;top:363.96px;font-size:14.40px;transform:scaleX(0.991);color:#0f1f10;-webkit-text-stroke:0.25px currentColor">1,234.32</div>
<div class="t" style="left:102.6px;top:492.00px;font-size:12.00px;transform:scaleX(0.942);color:#1a1a1a;-webkit-text-stroke:0.6px currentColor">Sheet1</div>
<div class="t" style="left:10.7px;top:518.58px;font-size:9.40px;transform:scaleX(0.904);color:#e6e6e6">Ready</div>
<div class="t" style="left:93.2px;top:518.67px;font-size:9.81px;transform:scaleX(0.895);color:#e6e6e6">Accessibility: Good to go</div>
<div class="t" style="left:682.4px;top:519.01px;font-size:9.19px;transform:scaleX(0.958);color:#e6e6e6">100%</div>
</body></html>
